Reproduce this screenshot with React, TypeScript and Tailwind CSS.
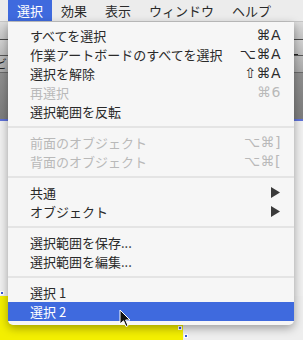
import React from "react";

const font = { fontFamily: '"Noto Sans CJK JP", "Noto Sans", sans-serif' };
const symFont = { fontFamily: '"DejaVu Sans", "Liberation Sans", sans-serif' };

type Item =
  | { type: "item"; label: string; shortcut?: string; disabled?: boolean; submenu?: boolean; active?: boolean }
  | { type: "sep" };

const items: Item[] = [
  { type: "item", label: "すべてを選択", shortcut: "⌘A" },
  { type: "item", label: "作業アートボードのすべてを選択", shortcut: "⌥⌘A" },
  { type: "item", label: "選択を解除", shortcut: "⇧⌘A" },
  { type: "item", label: "再選択", shortcut: "⌘6", disabled: true },
  { type: "item", label: "選択範囲を反転" },
  { type: "sep" },
  { type: "item", label: "前面のオブジェクト", shortcut: "⌥⌘]", disabled: true },
  { type: "item", label: "背面のオブジェクト", shortcut: "⌥⌘[", disabled: true },
  { type: "sep" },
  { type: "item", label: "共通", submenu: true },
  { type: "item", label: "オブジェクト", submenu: true },
  { type: "sep" },
  { type: "item", label: "選択範囲を保存..." },
  { type: "item", label: "選択範囲を編集..." },
  { type: "sep" },
  { type: "item", label: "選択 1" },
  { type: "item", label: "選択 2", active: true },
];

function Row({ it }: { it: Item }) {
  if (it.type === "sep") {
    return (
      <div className="h-[12px] flex items-center">
        <div className="h-[2px] w-full bg-[#e4e4e4]" />
      </div>
    );
  }
  const color = it.active ? "text-white" : it.disabled ? "text-[#b9b9b9]" : "text-[#2a2a2a]";
  return (
    <div
      className={`h-[19px] flex items-center justify-between pl-[22px] pr-[13px] text-[13px] leading-[19px] ${color} ${
        it.active ? "bg-[#3f6ade]" : ""
      }`}
    >
      <span style={font}>{it.label}</span>
      {it.shortcut && (
        <span className="text-[14px] tracking-[0.5px]" style={symFont}>
          {it.shortcut}
        </span>
      )}
      {it.submenu && (
        <svg width="9" height="11" viewBox="0 0 9 11" className="mr-[1px]">
          <path d="M0 0 L9 5.5 L0 11 Z" fill="#3a3a3a" />
        </svg>
      )}
    </div>
  );
}

export default function App() {
  return (
    <div className="relative w-[303px] h-[340px] overflow-hidden bg-[#eeeeee]" style={font}>
      {/* menu bar */}
      <div className="h-[22px] flex items-stretch bg-[#ececec] border-b border-[#c6c6c6] pl-[8px] text-[13px] text-[#2a2a2a]">
        <div className="px-[9px] flex items-center bg-[#3f6ade] text-white">選択</div>
        <div className="px-[9px] flex items-center">効果</div>
        <div className="px-[9px] flex items-center">表示</div>
        <div className="px-[9px] flex items-center">ウィンドウ</div>
        <div className="px-[9px] flex items-center">ヘルプ</div>
      </div>

      {/* background toolbar bands */}
      <div className="flex flex-col">
        <div className="h-[17px] bg-gradient-to-b from-[#dcdcdc] to-[#c3c3c3]" />
        <div className="h-[1px] bg-[#4a4a4a]" />
        <div className="h-[15px] bg-gradient-to-b from-[#d2d2d2] to-[#bcbcbc] flex justify-end">
          <div className="w-[4px] h-[1px] bg-[#222] mt-[14px] mr-[5px]" />
        </div>
        <div className="h-[1px] bg-[#555]" />
        <div className="h-[16px] bg-gradient-to-b from-[#bdbdbd] to-[#a9a9a9] overflow-hidden">
          <span className="block text-[12px] leading-[16px] text-[#222] -ml-[5px]">ビ</span>
        </div>
        <div className="h-[1px] bg-[#6a6a6a]" />
        <div className="h-[46px] bg-gradient-to-b from-[#8f8f8f] to-[#7d7d7d]" />
        <div className="h-[2px] bg-[#5f72d8]" />
        <div className="h-[175px] bg-[#f0f0f0]" />
        <div className="h-[46px] flex">
          <div className="w-[183px] h-full bg-[#f3ef00]" />
        </div>
      </div>

      {/* selection handles */}
      <div className="absolute left-[0px] top-[291px] w-[4px] h-[4px] bg-[#3b5bd6] border border-white" />
      <div className="absolute left-[178px] top-[326px] w-[4px] h-[4px] bg-[#3b5bd6] border border-white" />
      <div className="absolute left-[184px] top-[334px] w-[4px] h-[4px] bg-[#3b5bd6] border border-white" />

      {/* dropdown menu */}
      <div className="absolute left-[8px] top-[22px] w-[286px] bg-[#f6f6f6] rounded-b-[5px] pt-[4px] pb-[4px] shadow-[0_3px_10px_rgba(0,0,0,0.35)]">
        {items.map((it, i) => (
          <Row key={i} it={it} />
        ))}
      </div>

      {/* cursor */}
      <svg className="absolute left-[119px] top-[309px]" width="12" height="19" viewBox="0 0 12 19">
        <path
          d="M1 1 L1 15 L4.5 11.8 L7 17.5 L9 16.6 L6.6 11 L11 11 Z"
          fill="#111"
          stroke="#fff"
          strokeWidth="1"
          strokeLinejoin="round"
        />
      </svg>
    </div>
  );
}
